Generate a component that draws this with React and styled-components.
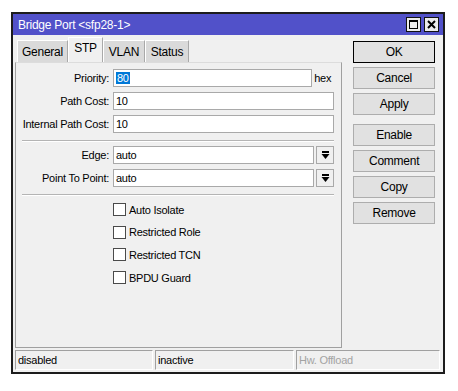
import React from "react";
import styled, { createGlobalStyle } from "styled-components";

const GlobalStyle = createGlobalStyle`
  body {
    margin: 0;
    background: #ffffff;
    font-family: "Liberation Sans", Arial, sans-serif;
    font-size: 11px;
    letter-spacing: -0.25px;
    color: #000;
  }
`;

const Window = styled.div`
  margin: 12px 0 0 11px;
  width: 434px;
  height: 362px;
  box-sizing: border-box;
  border: 2px solid #1c1c1c;
  background: #f0f0f0;
  display: flex;
  flex-direction: column;
`;

const TitleBar = styled.div`
  height: 21px;
  background: #5151c9;
  display: flex;
  align-items: center;
  justify-content: space-between;
  padding: 0 4px 0 5px;
  color: #fff;
  font-size: 12px;
`;

const TitleButtons = styled.div`
  display: flex;
  gap: 3px;
`;

const TitleButton = styled.div`
  width: 13px;
  height: 13px;
  background: #ececec;
  border: 1px solid #111;
  display: flex;
  align-items: center;
  justify-content: center;
`;

const Body = styled.div`
  display: flex;
  padding: 0 8px 0 2px;
  gap: 11px;
`;

const LeftColumn = styled.div`
  width: 328px;
  display: flex;
  flex-direction: column;
`;

const TabStrip = styled.div`
  height: 27px;
  display: flex;
  align-items: flex-end;
  padding-left: 2px;
`;

const Tab = styled.div`
  width: ${(p) => p.$w}px;
  height: ${(p) => (p.$active ? 25 : 22)}px;
  box-sizing: border-box;
  background: ${(p) => (p.$active ? "#f0f0f0" : "#dadada")};
  border-top: 1px solid #ffffff;
  border-left: 1px solid #ffffff;
  border-right: 1px solid #a9a9a9;
  display: flex;
  align-items: center;
  justify-content: center;
  padding-bottom: ${(p) => (p.$active ? 4 : 0)}px;
  font-size: 12px;
`;

const Panel = styled.div`
  height: 286px;
  box-sizing: border-box;
  border: 1px solid #a0a0a0;
  border-top-color: #dcdcdc;
  padding: 6px 7px 0 6px;
  display: flex;
  flex-direction: column;
`;

const FormRow = styled.div`
  display: flex;
  align-items: center;
  height: 18px;
  margin-bottom: 5px;
`;

const Label = styled.div`
  width: 87px;
  text-align: right;
  padding-right: 4px;
  flex-shrink: 0;
  white-space: nowrap;
`;

const Input = styled.div`
  flex: 1;
  height: 18px;
  box-sizing: border-box;
  background: #fff;
  border: 1px solid #a9a9a9;
  display: flex;
  align-items: center;
  padding-left: 2px;
`;

const Selected = styled.span`
  background: #0078d7;
  color: #fff;
  padding: 0 1px;
`;

const Unit = styled.div`
  width: 20px;
  padding-left: 2px;
`;

const DropButton = styled.div`
  width: 18px;
  height: 18px;
  box-sizing: border-box;
  margin-left: 2px;
  border: 1px solid #a9a9a9;
  background: #f0f0f0;
  display: flex;
  align-items: center;
  justify-content: center;
`;

const Separator = styled.div`
  height: 0;
  border-top: 1px solid #b4b4b4;
  border-bottom: 1px solid #ffffff;
  margin: 2px 0 4px;
`;

const CheckList = styled.div`
  display: flex;
  flex-direction: column;
  gap: 9.7px;
  padding-left: 91px;
  margin-top: 3px;
`;

const CheckRow = styled.div`
  display: flex;
  align-items: center;
  height: 13px;
  gap: 3px;
`;

const Box = styled.div`
  width: 13px;
  height: 13px;
  box-sizing: border-box;
  background: #fff;
  border: 1px solid #4a4a4a;
`;

const ButtonColumn = styled.div`
  width: 82px;
  display: flex;
  flex-direction: column;
  gap: 4px;
  padding-top: 6px;
`;

const Button = styled.div`
  height: 22px;
  box-sizing: border-box;
  background: #e1e1e1;
  border: 1px solid ${(p) => (p.$default ? "#000" : "#adadad")};
  display: flex;
  align-items: center;
  justify-content: center;
  font-size: 12px;
  margin-top: ${(p) => (p.$gapAbove ? 5 : 0)}px;
`;

const StatusBar = styled.div`
  display: flex;
  gap: 2px;
  padding: 2px 3px 0 2px;
`;

const StatusCell = styled.div`
  width: ${(p) => p.$w}px;
  height: 20px;
  box-sizing: border-box;
  border-top: 1px solid #a0a0a0;
  border-left: 1px solid #a0a0a0;
  border-right: 1px solid #ffffff;
  border-bottom: 1px solid #ffffff;
  display: flex;
  align-items: center;
  padding-left: 2px;
  color: ${(p) => (p.$muted ? "#a3a3a3" : "#000")};
`;

const DropIcon = () => (
  <svg width="9" height="9" viewBox="0 0 9 9">
    <rect x="1" y="0" width="7" height="2" fill="#000" />
    <path d="M0.5 3 H8.5 L4.5 8 Z" fill="#000" />
  </svg>
);

const tabs = [
  { name: "General", w: 51 },
  { name: "STP", w: 35, active: true },
  { name: "VLAN", w: 42 },
  { name: "Status", w: 44 },
];

const checks = ["Auto Isolate", "Restricted Role", "Restricted TCN", "BPDU Guard"];

const buttons = [
  { label: "OK", def: true },
  { label: "Cancel" },
  { label: "Apply" },
  { label: "Enable", gap: true },
  { label: "Comment" },
  { label: "Copy" },
  { label: "Remove" },
];

export default function App() {
  return (
    <>
      <GlobalStyle />
      <Window>
        <TitleBar>
          <span>Bridge Port &lt;sfp28-1&gt;</span>
          <TitleButtons>
            <TitleButton>
              <svg width="9" height="9" viewBox="0 0 9 9">
                <rect x="0.5" y="0.5" width="8" height="8" fill="none" stroke="#000" />
                <rect x="0" y="0" width="9" height="2" fill="#000" />
              </svg>
            </TitleButton>
            <TitleButton>
              <svg width="9" height="9" viewBox="0 0 9 9">
                <path d="M1 1 L8 8 M8 1 L1 8" stroke="#000" strokeWidth="2" />
              </svg>
            </TitleButton>
          </TitleButtons>
        </TitleBar>
        <Body>
          <LeftColumn>
            <TabStrip>
              {tabs.map((t) => (
                <Tab key={t.name} $w={t.w} $active={t.active}>
                  {t.name}
                </Tab>
              ))}
            </TabStrip>
            <Panel>
              <FormRow>
                <Label>Priority:</Label>
                <Input>
                  <Selected>80</Selected>
                </Input>
                <Unit>hex</Unit>
              </FormRow>
              <FormRow>
                <Label>Path Cost:</Label>
                <Input>10</Input>
              </FormRow>
              <FormRow>
                <Label>Internal Path Cost:</Label>
                <Input>10</Input>
              </FormRow>
              <Separator />
              <FormRow>
                <Label>Edge:</Label>
                <Input>auto</Input>
                <DropButton>
                  <DropIcon />
                </DropButton>
              </FormRow>
              <FormRow>
                <Label>Point To Point:</Label>
                <Input>auto</Input>
                <DropButton>
                  <DropIcon />
                </DropButton>
              </FormRow>
              <Separator />
              <CheckList>
                {checks.map((c) => (
                  <CheckRow key={c}>
                    <Box />
                    <span>{c}</span>
                  </CheckRow>
                ))}
              </CheckList>
            </Panel>
          </LeftColumn>
          <ButtonColumn>
            {buttons.map((b) => (
              <Button key={b.label} $default={b.def} $gapAbove={b.gap}>
                {b.label}
              </Button>
            ))}
          </ButtonColumn>
        </Body>
        <StatusBar>
          <StatusCell $w={138}>disabled</StatusCell>
          <StatusCell $w={139}>inactive</StatusCell>
          <StatusCell $w={144} $muted>
            Hw. Offload
          </StatusCell>
        </StatusBar>
      </Window>
    </>
  );
}
